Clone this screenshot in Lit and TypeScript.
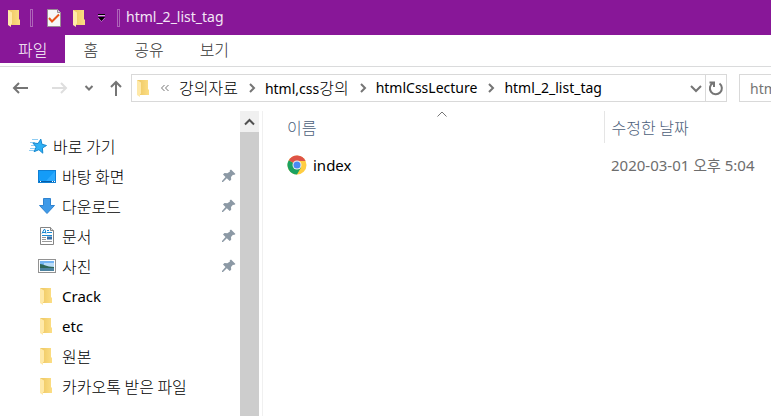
import { LitElement, html, css, svg } from "lit";
import { customElement } from "lit/decorators.js";

const folder = html`<svg class="icon" width="18" height="18" viewBox="0 0 18 18" aria-hidden="true">
  <defs>
    <linearGradient id="folder-fill"><stop offset="0" stop-color="#edc660" /><stop offset="1" stop-color="#fcde85" /></linearGradient>
  </defs>
  <path d="M2 1h11v9l1 1v5H4z" fill="url(#folder-fill)" />
  <path d="M2 1l4 2.500v11l-1 1V18l-3-2z" fill="#ffe9a8" />
</svg>`;

const star = html`<svg class="icon" width="18" height="18" viewBox="0 0 18 18" aria-hidden="true">
  <path d="M3 2.500h6M1 5.500h5M2 8.500h5M1 11.500h5M0 13.500h5" stroke="#8fcdf3" />
  <path d="M11.800 2.100L12.900 7.200 17.500 8.500 13.400 11 13.800 16.200 9.900 12.700 5.100 14.700 7.200 10 3.900 6 9.100 6.500z" fill="#2fb1f5" stroke="#1688cf" />
</svg>`;

const desktop = html`<svg class="icon" width="18" height="18" viewBox="0 0 18 18" aria-hidden="true">
  <rect x="0.500" y="3.500" width="17" height="12" fill="#149cf8" stroke="#0f7fd4" />
  <path d="M8 14L17 4v10z" fill="#2caaff" />
  <path d="M1 14.500h16" stroke="#075ca5" />
  <path d="M2 14.500h1M14 14.500h1M16 14.500h1" stroke="#fff" />
</svg>`;

const download = html`<svg class="icon" width="18" height="18" viewBox="0 0 18 18" aria-hidden="true">
  <path d="M5.500 1.500h7v7h4L9 16.500 1.500 8.500h4z" fill="#3f9ae8" stroke="#2f83d0" />
</svg>`;

const documentIcon = html`<svg class="icon" width="18" height="18" viewBox="0 0 18 18" aria-hidden="true">
  <path d="M2.500.500h10l3 3v14h-13z" fill="#fff" stroke="#858585" />
  <path d="M12.500.500v3h3" fill="#ddd" stroke="#858585" />
  <path d="M4 6.500l2-4h1l1 4M5 5.500h3M9 3.500h2M9 5.500h5M4 8.500h10" stroke="#1d8ad2" fill="none" />
  <path d="M4 10.500h4M4 12.500h4M4 14.500h10" stroke="#999" />
  <path d="M9 9.500h5v3H9z" fill="#356fa8" />
</svg>`;

const picture = html`<svg class="icon" width="18" height="18" viewBox="0 0 18 18" aria-hidden="true">
  <rect x="0.500" y="2.500" width="17" height="13" fill="#fff" stroke="#929292" />
  <path d="M2 4h14v10H2z" fill="#75b5f4" />
  <path d="M6 6h10v4H6z" fill="#b9dcf8" />
  <path d="M2 7c4 0 6 3 14 3v2H2z" fill="#2f6657" />
  <path d="M2 11h14v3H2z" fill="#4d83a0" />
</svg>`;

const pin = html`<svg class="pin" width="14" height="14" viewBox="0 0 14 14" role="img" aria-label="고정됨">
  <path d="M9 0.500L13.500 5l-1.500 1-1-.3-2 2.300.2 2.700-1.500 1.300-2.900-2.800L1 13H0v-1l3.500-4L1 5.500 2.500 4l2.800.3L8 2.500 7.700 1.500z" fill="#8c99a5" />
</svg>`;

const chrome = html`<svg class="icon" width="20" height="20" viewBox="0 0 20 20" aria-hidden="true">
  <circle cx="10" cy="10" r="9.500" fill="#ffcd42" />
  <path d="M10 10L1.800 5.200A9.500 9.500 0 0 0 10 19.500l4-7z" fill="#1aa260" />
  <path d="M10 10L1.800 5.200A9.500 9.500 0 0 1 18.600 6H10z" fill="#de5347" />
  <circle cx="10" cy="10" r="4.500" fill="#f1f1f1" />
  <circle cx="10" cy="10" r="3.500" fill="#4a8af4" />
</svg>`;

const stroke = (path: string, width = 2) => svg`<path d=${path} fill="none" stroke="currentColor" stroke-width=${width} />`;

// Hangul is set one step larger than the Latin text beside it.
const label = (text: string) =>
  html`<span>${text.split(/([가-힣][가-힣 ]*)/).filter(Boolean).map((run) => (/[가-힣]/.test(run) ? html`<span class="ko">${run}</span>` : run))}</span>`;

const crumbs = ["강의자료", "html,css강의", "htmlCssLecture", "html_2_list_tag"];

const places = [
  { icon: desktop, name: "바탕 화면", pinned: true },
  { icon: download, name: "다운로드", pinned: true },
  { icon: documentIcon, name: "문서", pinned: true },
  { icon: picture, name: "사진", pinned: true },
  { icon: folder, name: "Crack", pinned: false },
  { icon: folder, name: "etc", pinned: false },
  { icon: folder, name: "원본", pinned: false },
  { icon: folder, name: "카카오톡 받은 파일", pinned: false },
];

@customElement("app-root")
export class AppRoot extends LitElement {
  static styles = css`
    :host {
      display: flex;
      flex-direction: column;
      min-height: 100vh;
      overflow: hidden;
      background: #fff;
      color: #000;
      font: 15px/20px "Noto Sans", "Noto Sans CJK KR", sans-serif;
    }
    * { box-sizing: border-box; }
    svg { display: block; flex: none; }
    button, input { font: inherit; color: inherit; margin: 0; border-radius: 0; }
    button { display: flex; align-items: center; padding: 0; border: 0; background: none; }
    a { color: inherit; text-decoration: none; }
    .ko { font-family: "Noto Sans CJK KR", sans-serif; font-size: 16px; font-weight: 300; }
    .titlebar {
      display: flex;
      align-items: center;
      height: 35px;
      padding: 0 6px;
      background: #881798;
      color: #f3e6f5;
    }
    .divider { width: 3px; height: 18px; border: 1px solid #ae65b9; }
    .tools { display: flex; align-items: center; gap: 8px; padding: 0 11px 0 12px; color: #000; }
    .lead { padding-right: 6px; }
    .title { margin: 0; padding: 0 0 2px 6px; font-size: 14px; font-weight: 400; }
    .tabs { display: flex; height: 32px; border-bottom: 1px solid #dadbdc; color: #333; }
    .tab { height: 28px; padding: 0 18px; }
    .tab.active { background: #881798; color: #fff; }
    .navigation { display: flex; align-items: center; height: 44px; padding: 0 0 2px 12px; color: #757575; }
    .arrows { display: flex; align-items: center; gap: 16px; padding-right: 9px; }
    .faded { color: #dedede; }
    .address { display: flex; flex: 1; min-width: 0; height: 28px; border: 1px solid #d9d9d9; }
    .crumbs { display: flex; flex: 1; align-items: center; min-width: 0; margin: 0; padding: 0 0 0 3px; list-style: none; white-space: nowrap; overflow: hidden; font-size: 14px; }
    .crumb { display: flex; align-items: center; color: #000; }
    .crumb svg { margin: 0 9px 0 10px; color: #757575; }
    .back { padding: 0 9px 0 7px; }
    .drop { padding: 0 3px; }
    .refresh { padding: 0 2px; border-left: 1px solid #d9d9d9; }
    .search { flex: none; width: 32px; height: 28px; margin-left: 12px; padding: 0 0 0 10px; border: 1px solid #d9d9d9; border-right: 0; outline: 0; font-size: 14px; }
    .search::placeholder { color: #757575; opacity: 1; }
    .body { display: flex; flex: 1; }
    .sidebar { flex: none; width: 240px; padding: 20px 4px 15px 29px; }
    .place { display: flex; align-items: center; gap: 6px; height: 30px; }
    .places { margin: 0; padding: 0 0 0 9px; list-style: none; }
    .pin { margin-left: auto; }
    .scrollbar { flex: none; width: 19px; background: #cdcdcd; }
    .up { justify-content: center; width: 19px; height: 21px; background: #f0f0f0; color: #505050; }
    .files { flex: 1; min-width: 0; margin-left: 3px; border-left: 1px solid #f0f0f0; }
    table { width: 100%; table-layout: fixed; border-collapse: collapse; }
    th, td { padding: 0; text-align: left; font-weight: 400; white-space: nowrap; }
    th { height: 32px; color: #4c607a; }
    td { height: 44px; color: #6d6d6d; }
    .name { width: 341px; padding-left: 24px; }
    .date { padding-left: 7px; }
    th.name { position: relative; border-right: 1px solid #e5e5e5; }
    .sort { position: absolute; top: 0; left: 51%; color: #757575; }
    .file { display: flex; align-items: center; gap: 6px; color: #000; }
  `;

  render() {
    return html`
      <header class="titlebar">
        <span class="lead">${folder}</span>
        <span class="divider"></span>
        <div class="tools">
          <button aria-label="속성">
            <svg width="18" height="18" viewBox="0 0 18 18">
              <path d="M2.500.500h10l3 3v14h-13z" fill="#f7f7f7" stroke="#9a8b94" />
              <path d="M12.500.500v3h3" fill="#ddd" stroke="#9a8b94" />
              <path d="M4 9l3 3.500 7-7" fill="none" stroke="#e85518" stroke-width="2" />
            </svg>
          </button>
          <button aria-label="새 폴더">${folder}</button>
          <button aria-label="빠른 실행 도구 모음 사용자 지정">
            <svg width="9" height="8" viewBox="0 0 9 8">
              <path d="M1 .500h7" stroke="#000" />
              <path d="M1 1.500h7" stroke="#d5b0da" />
              <path d="M1 3h7L4.500 7z" fill="#000" />
              <path d="M1 4l3.500 3.500L8 4" fill="none" stroke="#d5b0da" stroke-width=".5" />
            </svg>
          </button>
        </div>
        <span class="divider"></span>
        <h1 class="title">html_2_list_tag</h1>
      </header>
      <nav class="tabs" aria-label="리본">
        <button class="tab active">${label("파일")}</button>
        <button class="tab">${label("홈")}</button>
        <button class="tab">${label("공유")}</button>
        <button class="tab">${label("보기")}</button>
      </nav>
      <div class="navigation">
        <div class="arrows">
          <button aria-label="뒤로"><svg width="20" height="14" viewBox="0 0 20 14">${stroke("M16 7H2M7 2L2 7l5 5")}</svg></button>
          <button class="faded" aria-label="앞으로" disabled><svg width="20" height="14" viewBox="0 0 20 14">${stroke("M4 7h14M13 2l5 5-5 5")}</svg></button>
          <button aria-label="최근 위치"><svg width="10" height="8" viewBox="0 0 10 8">${stroke("M1.500 2L5 5.500 8.500 2")}</svg></button>
          <button aria-label="위로"><svg width="12" height="16" viewBox="0 0 12 16">${stroke("M6 16V2M1 7l5-5 5 5")}</svg></button>
        </div>
        <div class="address">
          <ol class="crumbs">
            <li>${folder}</li>
            <li class="back"><svg width="10" height="8" viewBox="0 0 10 8">${stroke("M4.500 1L1.500 4l3 3M8.500 1l-3 3 3 3", 1)}</svg></li>
            ${crumbs.map(
              (crumb, i) => html`<li class="crumb">
                ${i ? html`<svg width="8" height="10" viewBox="0 0 8 10">${stroke("M2 1l4 4-4 4")}</svg>` : ""}<a href="#">${label(crumb)}</a>
              </li>`
            )}
          </ol>
          <button class="drop" aria-label="이전 위치"><svg width="12" height="10" viewBox="0 0 12 10">${stroke("M1 3l5 5 5-5")}</svg></button>
          <button class="refresh" aria-label="새로 고침">
            <svg width="16" height="16" viewBox="0 0 16 16">${stroke("M11.500 3.500A6 6 0 1 1 5 3M1.500 2.500H6V7")}</svg>
          </button>
        </div>
        <input class="search" type="text" aria-label="html_2_list_tag 검색" placeholder="html_2_list_tag 검색" />
      </div>
      <div class="body">
        <nav class="sidebar" aria-label="탐색 창">
          <a class="place" href="#">${star}${label("바로 가기")}</a>
          <ul class="places">
            ${places.map((p) => html`<li><a class="place" href="#">${p.icon}${label(p.name)}${p.pinned ? pin : ""}</a></li>`)}
          </ul>
        </nav>
        <div class="scrollbar">
          <button class="up" aria-label="위로 스크롤"><svg width="11" height="8" viewBox="0 0 11 8">${stroke("M1 6.500L5.500 2 10 6.500")}</svg></button>
        </div>
        <main class="files">
          <table>
            <thead>
              <tr>
                <th class="name" aria-sort="ascending">${label("이름")}<svg class="sort" width="10" height="7" viewBox="0 0 10 7">${stroke("M.500 5.500L5 1l4.500 4.500", 1)}</svg></th>
                <th class="date">${label("수정한 날짜")}</th>
              </tr>
            </thead>
            <tbody>
              <tr>
                <td class="name"><a class="file" href="#">${chrome}index</a></td>
                <td class="date">2020-03-01 오후 5:04</td>
              </tr>
            </tbody>
          </table>
        </main>
      </div>
    `;
  }
}
